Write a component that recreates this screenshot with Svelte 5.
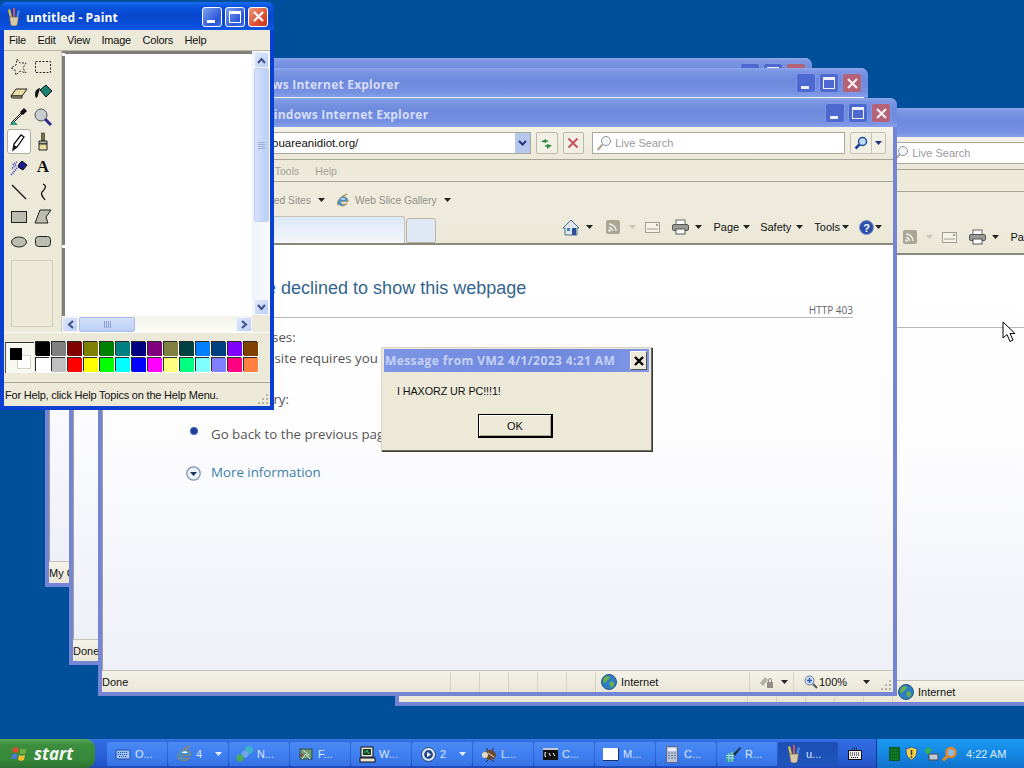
<script>
  const palette = [
    "#000000", "#808080", "#800000", "#808000", "#008000", "#008080", "#000080", "#800080", "#808040", "#004040", "#0080ff", "#004080", "#8000ff", "#804000",
    "#ffffff", "#c0c0c0", "#ff0000", "#ffff00", "#00ff00", "#00ffff", "#0000ff", "#ff00ff", "#ffff80", "#00ff80", "#80ffff", "#8080ff", "#ff0080", "#ff8040"
  ];
  const tools = ["free", "rect", "eraser", "fill", "picker", "zoom", "pencil", "brush", "air", "text", "line", "curve", "box", "poly", "oval", "round"];
  const menus = ["File", "Edit", "View", "Image", "Colors", "Help"];
  const tasks = [
    { icon: "osk", label: "O..." },
    { icon: "ie", label: "4", arrow: true },
    { icon: "net", label: "N..." },
    { icon: "fx", label: "F..." },
    { icon: "pc", label: "W..." },
    { icon: "media", label: "2", arrow: true },
    { icon: "bug", label: "L..." },
    { icon: "cmd", label: "C..." },
    { icon: "blank", label: "M..." },
    { icon: "calc", label: "C..." },
    { icon: "reg", label: "R..." },
    { icon: "paint", label: "u...", active: true }
  ];
  const ieWindows = [
    { cls: "w4", status: "Done" },
    { cls: "w1", status: "My Computer" },
    { cls: "w2", status: "Done" },
    { cls: "w3", status: "Done" }
  ];
</script>

{#snippet capButtons(kind)}
  <div class="caps {kind}">
    <span class="cap"><i class="min"></i></span>
    <span class="cap"><i class="max"></i></span>
    <span class="cap close">
      <svg width="13" height="13" viewBox="0 0 13 13"><path d="M2 2l9 9M11 2l-9 9" stroke="#fff" stroke-width="2.2" fill="none" /></svg>
    </span>
  </div>
{/snippet}

{#snippet arrow(color = "#222")}
  <svg class="arr" width="7" height="4" viewBox="0 0 7 4"><path d="M0 0h7L3.5 4z" fill={color} /></svg>
{/snippet}

{#snippet globe()}
  <svg width="16" height="16" viewBox="0 0 16 16">
    <circle cx="8" cy="8" r="7.5" fill="#2f7fc4" stroke="#23557f" />
    <path d="M3 4c2-2 5-2 6-1 0 2-2 2-3 4S3 9 2 8zM9 8c2-1 4 0 4 2s-2 4-3 3-2-3-1-5z" fill="#6bb04a" />
  </svg>
{/snippet}

{#snippet ieIcon(size = 16)}
  <svg width={size} height={size} viewBox="0 0 16 16">
    <path d="M3 13C1 9 6 3 13 1c-2 1-3 2-4 3 3 0 5 2 5 5H6c0 3 4 4 7 2-2 3-7 4-9 1-1 1-1 1-1 1z" fill="#3c8fd8" stroke="#b9862a" stroke-width=".7" />
    <path d="M6 7h5c0-2-4-2-5 0z" fill="#fff" />
  </svg>
{/snippet}

{#snippet paintIcon()}
  <svg width="14" height="18" viewBox="0 0 14 18">
    <path d="M3 10L1 2l2-1 2 8z" fill="#e8c040" />
    <path d="M6 9L6 0h2l0 9z" fill="#d85050" />
    <path d="M9 10l2-8 2 1-2 7z" fill="#5090d8" />
    <path d="M2.500 9h9l-1 7a3.500 2 0 0 1-7 0z" fill="#d8c8a8" stroke="#6a5a40" stroke-width=".6" />
  </svg>
{/snippet}

{#snippet taskIcon(name)}
  {#if name === "osk"}
    <svg width="16" height="16" viewBox="0 0 16 16"><rect x="1" y="4" width="14" height="9" rx="1" fill="#9cc4f4" stroke="#244a9c" /><path d="M3 6.5h10M3 8.5h10M4 10.5h8" stroke="#244a9c" stroke-dasharray="1 1" /></svg>
  {:else if name === "ie"}
    {@render ieIcon(18)}
  {:else if name === "net"}
    <svg width="18" height="16" viewBox="0 0 18 16"><path d="M2 13L15 3" stroke="#e8e8e8" stroke-width="2" /><circle cx="13" cy="4" r="4" fill="#39b3c8" /><circle cx="9" cy="8" r="3.5" fill="#6ca6e8" /><circle cx="4" cy="12" r="3.5" fill="#4aa858" /></svg>
  {:else if name === "fx"}
    <svg width="16" height="16" viewBox="0 0 16 16"><rect x="2" y="3" width="12" height="10" fill="#6d9c78" stroke="#2e4a48" /><path d="M4 13l4-5 4 5M5 4l6 5" stroke="#d8e8d0" fill="none" /><path d="M3 7l3 2-3 2z" fill="#b03030" /></svg>
  {:else if name === "pc"}
    <svg width="17" height="17" viewBox="0 0 17 17"><rect x="2" y="1" width="12" height="10" fill="#e8e4d4" stroke="#111" /><rect x="4" y="3" width="8" height="6" fill="#14402c" /><path d="M5 6h2l1-2 1 3h2" stroke="#50e070" fill="none" stroke-width=".7" /><rect x="1" y="12" width="15" height="4" fill="#e8e4d4" stroke="#111" /></svg>
  {:else if name === "media"}
    <svg width="15" height="15" viewBox="0 0 15 15"><circle cx="7.5" cy="7.5" r="7" fill="#dfe6f4" stroke="#24406c" /><circle cx="7.5" cy="7.5" r="4.4" fill="#24488c" /><path d="M6 5l4 2.500-4 2.500z" fill="#fff" /></svg>
  {:else if name === "bug"}
    <svg width="18" height="15" viewBox="0 0 18 15"><ellipse cx="10" cy="8" rx="6" ry="5" fill="#6a4a30" /><circle cx="5" cy="8" r="3" fill="#e8d8c0" /><path d="M8 3l-2-2M12 3l2-2M8 13l-2 2M12 13l2 2" stroke="#222" /><path d="M8 6l6 4" stroke="#e8d8c0" /></svg>
  {:else if name === "cmd"}
    <svg width="15" height="12" viewBox="0 0 15 12"><rect width="15" height="12" fill="#111" /><rect y="0" width="15" height="2" fill="#c8c8d8" /><path d="M3 4.500h-1v4h1M6 5l1.500 3M10 5l2 3" stroke="#fff" fill="none" /></svg>
  {:else if name === "blank"}
    <svg width="16" height="13" viewBox="0 0 16 13"><rect width="16" height="13" fill="#fff" /><path d="M15.500 0v12.500H0" stroke="#16306c" fill="none" /></svg>
  {:else if name === "calc"}
    <svg width="12" height="17" viewBox="0 0 12 17"><rect x=".5" y=".5" width="11" height="16" fill="#b8c4d8" stroke="#5a6a88" /><rect x="2" y="2" width="8" height="3" fill="#e8eef8" /><path d="M2 7h8M2 9.500h8M2 12h8" stroke="#6a7a98" stroke-dasharray="2 1" /></svg>
  {:else if name === "reg"}
    <svg width="17" height="17" viewBox="0 0 17 17"><path d="M1 9l8-4v11H1z" fill="#2f9ea8" /><path d="M1 12h8M1 9.500h8M4 7v9M7 6v10" stroke="#d8f0f0" stroke-width=".7" /><path d="M8 8l7-7 1 1-6 8z" fill="#203040" /></svg>
  {:else if name === "paint"}
    {@render paintIcon()}
  {/if}
{/snippet}

{#snippet toolIcon(name)}
  <svg width="20" height="20" viewBox="0 0 20 20">
    {#if name === "free"}
      <path d="M8 2l3 4 6 0-3 5 3 5-6-2-4 4-1-5-4-2 5-3z" fill="none" stroke="#222" stroke-dasharray="2 1.500" />
    {:else if name === "rect"}
      <rect x="2.500" y="4.500" width="15" height="11" fill="none" stroke="#222" stroke-dasharray="2 1.500" />
    {:else if name === "eraser"}
      <path d="M2 14l5-7h11l-5 7z" fill="#e8dca0" stroke="#222" /><path d="M2 14h11l0 2H3z" fill="#c8bc80" stroke="#222" />
    {:else if name === "fill"}
      <path d="M7 8l6-5 6 6-6 6z" fill="#1c8070" stroke="#111" /><path d="M7 6C2 7 1 12 3 16c2 0 2-4 3-6z" fill="#111" />
    {:else if name === "picker"}
      <path d="M13 7l-9 9-2 2 1-3 9-9z" fill="#fff" stroke="#111" /><path d="M11 5l4-4 3 3-4 4z" fill="#111" /><path d="M1 18h8l-4-4z" fill="#2a9a80" />
    {:else if name === "zoom"}
      <circle cx="8" cy="8" r="6" fill="#c8ccd0" stroke="#555" /><path d="M12 12l6 6" stroke="#2a2a90" stroke-width="3" />
    {:else if name === "pencil"}
      <path d="M4 18l1-6 7-9 3 2-7 10z" fill="#fff" stroke="#111" stroke-width="1.300" /><path d="M4 18l1-5 3 2z" fill="#111" />
    {:else if name === "brush"}
      <rect x="8.500" y="1" width="3" height="8" fill="#807040" stroke="#222" stroke-width=".6" /><path d="M6 9h8v3H6z" fill="#b8b8a8" stroke="#222" /><path d="M6 12h8v6H6z" fill="#e8dca0" stroke="#222" />
    {:else if name === "air"}
      <path d="M10 7l3-3 5 4-4 5-5-3z" fill="#1c1c90" stroke="#111" /><path d="M8 5L3 8M7 8l-5 4M8 11l-6 7" stroke="#4444c0" stroke-dasharray="1 1" stroke-width="2" />
    {:else if name === "line"}
      <path d="M3 3l14 14" stroke="#111" stroke-width="1.300" />
    {:else if name === "curve"}
      <path d="M10 2c5 2 1 6-1 8-2 3 2 6 3 8" stroke="#111" fill="none" stroke-width="1.300" />
    {:else if name === "box"}
      <rect x="2.500" y="4.500" width="15" height="11" fill="#bcbcb0" stroke="#222" />
    {:else if name === "poly"}
      <path d="M7 3h11l-5 7 2 6H2z" fill="#bcbcb0" stroke="#222" />
    {:else if name === "oval"}
      <ellipse cx="10" cy="10" rx="7.500" ry="5" fill="#bcbcb0" stroke="#222" />
    {:else if name === "round"}
      <rect x="2.500" y="4.500" width="15" height="10" rx="3" fill="#bcbcb0" stroke="#222" />
    {/if}
  </svg>
{/snippet}

{#snippet ieWindow(win)}
  <section class="ie {win.cls}">
    <header class="ie-title">
      <span class="ie-name">HTTP 403 Forbidden - Windows Internet Explorer</span>
      {@render capButtons("faded")}
    </header>

    <div class="ie-address">
      <div class="url">
        <span>http://www.youareanidiot.org/</span>
        <span class="drop">
          <svg width="9" height="7" viewBox="0 0 9 7"><path d="M1 1l3.500 3.500L8 1" stroke="#23337a" stroke-width="2" fill="none" /></svg>
        </span>
      </div>
      <span class="nav-btn">
        <svg width="15" height="13" viewBox="0 0 15 13"><path d="M7 2L2 4.500 7 6zM8 12l5-3.500L8 7z" fill="#2c8a3c" /><path d="M6 4h3M9 9H6" stroke="#2c8a3c" stroke-width="1.500" /></svg>
      </span>
      <span class="nav-btn">
        <svg width="12" height="12" viewBox="0 0 12 12"><path d="M1.500 1.500l9 9M10.500 1.500l-9 9" stroke="#c5525a" stroke-width="2" /></svg>
      </span>
      <div class="search">
        <svg width="16" height="17" viewBox="0 0 16 17"><circle cx="10" cy="6" r="4.500" fill="#f4f6f8" stroke="#8a959c" /><path d="M6.500 9.500L1.500 15" stroke="#a9a28c" stroke-width="2" /></svg>
        <span>Live Search</span>
      </div>
      <div class="search-go">
        <span class="lens">
          <svg width="14" height="14" viewBox="0 0 14 14"><circle cx="8.500" cy="5.500" r="4" fill="#bcdcf8" stroke="#1f4f9c" stroke-width="1.500" /><path d="M5.500 8.500L1.500 12.500" stroke="#1f3f8c" stroke-width="2.500" /></svg>
        </span>
        <span class="lens-drop">{@render arrow("#23337a")}</span>
      </div>
    </div>

    <nav class="ie-menu">
      <span>File</span><span>Edit</span><span>View</span><span>Favorites</span><span>Tools</span><span>Help</span>
    </nav>

    <div class="ie-favs">
      <span class="fav-lead">Favorites</span>
      <span class="fav">Suggested Sites</span>
      {@render arrow()}
      <span class="fav-icon">{@render ieIcon(15)}</span>
      <span class="fav">Web Slice Gallery</span>
      {@render arrow()}
    </div>

    <div class="ie-tabs">
      <span class="tab"></span>
      <span class="tab-new"></span>
      <div class="cmd">
        <svg width="18" height="17" viewBox="0 0 18 17"><path d="M9 1L1 9h2v7h12V9h2z" fill="#dfe7ee" stroke="#4c6f80" /><rect x="10" y="9" width="4" height="7" fill="#2c4c9c" /><rect x="5" y="9" width="3" height="3" fill="#3f7fc4" /></svg>
        <span class="a-home">{@render arrow()}</span>
        <svg class="rss" width="14" height="14" viewBox="0 0 14 14"><rect width="14" height="14" rx="2" fill="#a9a794" /><path d="M3 4a7 7 0 0 1 7 7M3 7.500a3.500 3.500 0 0 1 3.500 3.500" stroke="#eee" stroke-width="1.500" fill="none" /><circle cx="3.500" cy="10.500" r="1.300" fill="#eee" /></svg>
        <span class="a-off">{@render arrow("#c9c7b8")}</span>
        <svg class="mail" width="15" height="11" viewBox="0 0 15 11"><rect x=".5" y=".5" width="14" height="10" fill="#f4f2e8" stroke="#a09e90" /><path d="M2 7h11" stroke="#a09e90" /><rect x="11" y="2" width="2" height="2" fill="#a09e90" /></svg>
        <svg class="printer" width="17" height="16" viewBox="0 0 17 16"><rect x="4" y="1" width="9" height="5" fill="#fff" stroke="#666" /><rect x=".5" y="5.500" width="16" height="6" rx="1.500" fill="#9a9a98" stroke="#555" /><rect x="4" y="10" width="9" height="5" fill="#fff" stroke="#555" /></svg>
        <span class="a-print">{@render arrow()}</span>
        <span class="c-page">Page</span><span class="a-page">{@render arrow()}</span>
        <span class="c-safety">Safety</span><span class="a-safety">{@render arrow()}</span>
        <span class="c-tools">Tools</span><span class="a-tools">{@render arrow()}</span>
        <svg class="help" width="15" height="15" viewBox="0 0 15 15"><circle cx="7.500" cy="7.500" r="7" fill="#2d4ea8" stroke="#7c93c8" /><text x="7.500" y="11.500" font-size="11" font-weight="700" fill="#fff" text-anchor="middle" font-family="Liberation Sans">?</text></svg>
        <span class="a-help">{@render arrow()}</span>
      </div>
    </div>

    <main class="ie-page">
      <h1>The website declined to show this webpage</h1>
      <div class="code">HTTP 403</div>
      <p class="cause">Most likely causes:</p>
      <p class="cause-item">This website requires you to log in.</p>
      <p class="try">What you can try:</p>
      <div class="row back"><i class="dot"></i><span>Go back to the previous page.</span></div>
      <div class="row more">
        <svg width="15" height="15" viewBox="0 0 15 15"><circle cx="7.500" cy="7.500" r="6.700" fill="#eef2f8" stroke="#7d95b4" stroke-width="1.300" /><path d="M4 6h7L7.500 10z" fill="#17305c" /></svg>
        <span>More information</span>
      </div>
    </main>

    <footer class="ie-status">
      <span class="st-text">{win.status}</span>
      <span class="st-cell"></span><span class="st-cell"></span><span class="st-cell"></span><span class="st-cell"></span><span class="st-cell"></span>
      <span class="st-zone">{@render globe()}<span>Internet</span></span>
      <span class="st-lock">
        <svg width="15" height="14" viewBox="0 0 15 14"><path d="M1 8l5-6 3 3-5 6z" fill="#b0b0a4" /><rect x="8" y="7" width="6" height="6" fill="#908e84" /><path d="M9.500 7V5a1.500 1.500 0 0 1 3 0v2" stroke="#908e84" fill="none" /></svg>
        {@render arrow()}
      </span>
      <span class="st-zoom">
        <svg width="14" height="14" viewBox="0 0 14 14"><circle cx="5.500" cy="5.500" r="4.500" fill="#cfe2f8" stroke="#6a7c94" /><path d="M3 5.500h5M5.500 3v5" stroke="#2c5cc0" stroke-width="1.500" /><path d="M9 9l4 4" stroke="#555" stroke-width="2" /></svg>
        <span>100%</span>
        <span class="zoom-arr">{@render arrow()}</span>
      </span>
      <span class="grip"></span>
    </footer>
  </section>
{/snippet}

<div class="desktop">
  {#each ieWindows as win}
    {@render ieWindow(win)}
  {/each}

  <section class="paint">
    <header class="paint-title">
      <span class="paint-ico">{@render paintIcon()}</span>
      <span class="paint-name">untitled - Paint</span>
      {@render capButtons("bright")}
    </header>
    <nav class="paint-menu">
      {#each menus as m}<span>{m}</span>{/each}
    </nav>
    <div class="paint-main">
      <aside class="toolbox">
        <div class="tools">
          {#each tools as t}
            <span class="tool" class:on={t === "pencil"}>
              {#if t === "text"}
                <b class="glyph-a">A</b>
              {:else}
                {@render toolIcon(t)}
              {/if}
            </span>
          {/each}
        </div>
        <div class="tool-opts"></div>
      </aside>
      <div class="canvas-wrap">
        <div class="canvas"><i class="handle h1"></i><i class="handle h2"></i></div>
        <div class="hbar">
          <span class="sb-btn">
            <svg width="7" height="9" viewBox="0 0 7 9"><path d="M6 1L2 4.500 6 8" stroke="#3d4f8f" stroke-width="2" fill="none" /></svg>
          </span>
          <span class="hthumb"><i></i></span>
          <span class="sb-btn right">
            <svg width="7" height="9" viewBox="0 0 7 9"><path d="M1 1l4 3.500L1 8" stroke="#3d4f8f" stroke-width="2" fill="none" /></svg>
          </span>
        </div>
      </div>
      <div class="vbar">
        <span class="sb-btn">
          <svg width="9" height="7" viewBox="0 0 9 7"><path d="M1 6l3.500-4L8 6" stroke="#3d4f8f" stroke-width="2" fill="none" /></svg>
        </span>
        <span class="vthumb"><i></i></span>
        <span class="sb-btn end">
          <svg width="9" height="7" viewBox="0 0 9 7"><path d="M1 1l3.500 4L8 1" stroke="#3d4f8f" stroke-width="2" fill="none" /></svg>
        </span>
      </div>
    </div>
    <div class="paint-colors">
      <div class="current"><i class="bg"></i><i class="fg"></i></div>
      <div class="swatches">
        {#each palette as c}
          <span class="swatch" style="background:{c}"></span>
        {/each}
      </div>
    </div>
    <footer class="paint-status">
      <span>For Help, click Help Topics on the Help Menu.</span>
      <span class="grip"></span>
    </footer>
  </section>

  <div class="dialog">
    <header class="dlg-title">
      <span>Message from VM2 4/1/2023 4:21 AM</span>
      <span class="dlg-x">
        <svg width="10" height="10" viewBox="0 0 10 10"><path d="M1 1l8 8M9 1l-8 8" stroke="#000" stroke-width="2.400" /></svg>
      </span>
    </header>
    <p>I HAXORZ UR PC!!!1!</p>
    <button class="ok">OK</button>
  </div>

  <svg class="cursor" width="14" height="22" viewBox="0 0 14 22"><path d="M1 1v16l4-3.500 3 7 3-1.500-3-6.500h5z" fill="#fff" stroke="#000" /></svg>

  <div class="spacer"></div>

  <div class="taskbar">
    <div class="start">
      <svg width="18" height="18" viewBox="0 0 18 18">
        <path d="M2 3c2-1 4-1 6 0L7 8C5 7 3 7 1 8z" fill="#d8502c" />
        <path d="M9.500 3.500c2 1 4 1 6 0l-1 5c-2 1-4 1-6 0z" fill="#6cb040" />
        <path d="M1 9.500c2-1 4-1 5.500 0l-1 5c-2-1-4-1-5.500 0z" fill="#4a7ad8" />
        <path d="M8 10c2 1 4 1 6 0l-1 5c-2 1-4 1-6 0z" fill="#f0c030" />
      </svg>
      <span>start</span>
    </div>
    <div class="tasks">
      {#each tasks as t}
        <div class="task" class:active={t.active}>
          <span class="task-ico">{@render taskIcon(t.icon)}</span>
          <span class="task-label">{t.label}</span>
          {#if t.arrow}<span class="task-arr">{@render arrow("#e8f0ff")}</span>{/if}
        </div>
      {/each}
    </div>
    <div class="kbd">
      <svg width="14" height="13" viewBox="0 0 14 13"><path d="M4 0h6M4 2h6" stroke="#111" stroke-dasharray="1 1" /><rect x=".5" y="3.500" width="13" height="9" fill="#eee" stroke="#111" /><path d="M2 6h10M2 8h10M3 10.500h8" stroke="#111" stroke-dasharray="1 1" /></svg>
    </div>
    <div class="tray">
      <svg width="11" height="14" viewBox="0 0 11 14"><rect width="11" height="14" fill="#0a6a1c" stroke="#043" /><path d="M2 3h7M2 6h7M2 9h7M2 12h7" stroke="#2a9a3c" stroke-dasharray="1 1" /></svg>
      <svg width="13" height="15" viewBox="0 0 13 15"><path d="M6.500 1C9 2 10 2.500 12 2.500c0 6-1 9-5.500 11.500C2 11.500 1 8.500 1 2.500 3 2.500 4 2 6.500 1z" fill="#f2d040" stroke="#2a5ab0" /><path d="M6.500 4v5" stroke="#333" stroke-width="1.500" /><circle cx="6.500" cy="11" r=".9" fill="#333" /></svg>
      <svg width="16" height="16" viewBox="0 0 16 16"><path d="M5 1l5 4H7v3H3V5H1z" fill="#3cb050" /><rect x="6" y="8" width="9" height="6" fill="#c0c8d0" stroke="#445" /></svg>
      <svg class="tray-find" width="17" height="16" viewBox="0 0 17 16"><circle cx="10" cy="6.500" r="4.500" fill="#8fb8e8" stroke="#e88a24" stroke-width="2.400" /><path d="M6.500 10L2 14.500" stroke="#e88a24" stroke-width="3" /></svg>
      <span class="clock">4:22 AM</span>
    </div>
  </div>
</div>

<style>
  :global(body) {
    margin: 0;
    overflow: hidden;
    font-family: "Liberation Sans", Arial, sans-serif;
  }

  .desktop {
    position: relative;
    width: 1024px;
    height: 768px;
    overflow: hidden;
    background: #004f9b;
    display: flex;
    flex-direction: column;
    font-size: 11px;
    color: #111;
  }

  .spacer {
    flex: 1;
  }

  .cursor {
    position: absolute;
    left: 1002px;
    top: 321px;
  }

  /* IE windows: free canvas, each is offset from the last */
  .ie {
    position: absolute;
    box-sizing: border-box;
    display: flex;
    flex-direction: column;
    width: 799px;
    height: 598px;
    background: #ece9d8;
    border: 4px solid #7485d6;
    border-top: 0;
    border-radius: 7px 7px 0 0;
  }
  .w1 { left: 45px; top: 58px; width: 767px; height: 529px; }
  .w2 { left: 69px; top: 68px; height: 597px; }
  .w3 { left: 98px; top: 98px; }
  .w4 { left: 395px; top: 108px; }

  .ie-title {
    height: 29px;
    margin: 0 -4px;
    padding: 0 6px 0 0;
    flex: none;
    display: flex;
    align-items: center;
    justify-content: space-between;
    border-radius: 7px 7px 0 0;
    background: linear-gradient(#8da6ea 0, #7d97e4 3px, #6d89dc 12px, #7690e2 24px, #86a0ea 29px);
    color: #d5def8;
    font-family: "Open Sans", sans-serif;
    font-weight: 700;
    font-size: 12px;
  }
  .ie-name {
    padding: 4px 0 0 31px;
    letter-spacing: .22px;
    white-space: nowrap;
  }

  .caps {
    display: flex;
    gap: 3px;
    margin-top: 1px;
  }
  .cap {
    box-sizing: border-box;
    width: 20px;
    height: 20px;
    display: flex;
    align-items: center;
    justify-content: center;
    border: 1px solid #fff;
    border-radius: 3px;
    position: relative;
  }
  .caps.faded .cap {
    background: #4d69cf;
    border-color: #7f97e4;
  }
  .caps.faded .cap.close {
    background: #b56277;
  }
  .caps.bright .cap {
    background: linear-gradient(135deg, #7ea3f2, #2b57d8 70%, #3a6ae6);
  }
  .caps.bright .cap.close {
    background: linear-gradient(135deg, #ef9a7c, #d8482c 70%, #c43a1c);
  }
  .min {
    position: absolute;
    left: 4px;
    bottom: 3px;
    width: 8px;
    height: 3px;
    background: #fff;
  }
  .max {
    box-sizing: border-box;
    width: 12px;
    height: 12px;
    border: 1px solid #fff;
    border-top-width: 3px;
  }
  .faded .min, .faded .max { opacity: .9; }
  .faded .close svg { opacity: .9; }

  .ie-address {
    height: 33px;
    flex: none;
    display: flex;
    align-items: center;
    box-sizing: border-box;
    border-bottom: 1px solid #a6a493;
    padding: 0 7px 0 97px;
    background: linear-gradient(#f4f2e8, #ebe8d8);
  }
  .url {
    box-sizing: border-box;
    width: 336px;
    height: 22px;
    display: flex;
    align-items: center;
    justify-content: space-between;
    background: #fff;
    border: 1px solid #a8a898;
    padding-left: 10px;
    font-size: 11.500px;
    color: #111;
  }
  .drop {
    width: 15px;
    height: 20px;
    background: #b6c7ee;
    display: flex;
    align-items: center;
    justify-content: center;
  }
  .nav-btn {
    box-sizing: border-box;
    width: 22px;
    height: 22px;
    margin-left: 5px;
    display: flex;
    align-items: center;
    justify-content: center;
    border: 1px solid #bbb9a8;
    border-radius: 2px;
    background: #f2f0e4;
  }
  .search {
    box-sizing: border-box;
    width: 256px;
    height: 22px;
    margin-left: 8px;
    display: flex;
    align-items: center;
    gap: 3px;
    padding-left: 3px;
    background: #fff;
    border: 1px solid #a8a898;
    color: #9a9a9a;
    font-size: 11px;
  }
  .search-go {
    margin-left: 5px;
    height: 22px;
    display: flex;
    box-sizing: border-box;
    border: 1px solid #c4c2b2;
    border-radius: 2px;
    background: #f2f0e4;
  }
  .lens {
    width: 20px;
    display: flex;
    align-items: center;
    justify-content: center;
    border-right: 1px solid #c4c2b2;
  }
  .lens-drop {
    width: 13px;
    display: flex;
    align-items: center;
    justify-content: center;
  }

  .ie-menu {
    height: 22px;
    flex: none;
    box-sizing: border-box;
    display: flex;
    align-items: center;
    border-bottom: 1px solid #a6a493;
    padding: 1px 0 0 8px;
    background: linear-gradient(#ece9d8, #eeebdc);
    color: #a2a096;
    font-size: 10.500px;
    gap: 16px;
  }

  .ie-favs {
    height: 33px;
    flex: none;
    box-sizing: border-box;
    display: flex;
    align-items: center;
    padding: 3px 0 0 30px;
    background: #eeebdc;
    color: #8f8f88;
    font-size: 10.300px;
  }
  .fav-lead { width: 104px; }
  .fav { white-space: nowrap; }
  .ie-favs .arr { margin-left: 7px; }
  .fav-icon {
    margin: 0 5px 0 10px;
    display: flex;
  }

  .ie-tabs {
    height: 30px;
    flex: none;
    display: flex;
    align-items: flex-end;
    box-sizing: border-box;
    border-bottom: 2px solid #8a8878;
    background: linear-gradient(#eeebdc, #ebe8d8);
  }
  .tab {
    box-sizing: border-box;
    width: 303px;
    height: 27px;
    background: linear-gradient(#dce8f8, #f4f7fb);
    border: 1px solid #c4c2b2;
    border-bottom: 0;
    border-radius: 3px 3px 0 0;
  }
  .tab-new {
    box-sizing: border-box;
    width: 30px;
    height: 25px;
    margin-left: 1px;
    background: #dfe8f4;
    border: 1px solid #b8b6a6;
    border-radius: 3px 3px 2px 2px;
  }
  .cmd {
    flex: 1;
    height: 28px;
    box-sizing: border-box;
    display: flex;
    align-items: center;
    justify-content: flex-end;
    padding: 0 11px 4px 0;
    color: #111;
    font-size: 11px;
  }
  .cmd > span { display: flex; align-items: center; }
  .a-home { margin-left: 6px; }
  .rss { margin-left: 13px; }
  .a-off { margin-left: 9px; }
  .mail { margin-left: 9px; }
  .printer { margin-left: 12px; }
  .a-print { margin-left: 6px; }
  .c-page { margin-left: 11px; }
  .a-page { margin-left: 4px; }
  .c-safety { margin-left: 10px; }
  .a-safety { margin-left: 5px; }
  .c-tools { margin-left: 11px; }
  .a-tools { margin-left: 2px; }
  .help { margin-left: 10px; }
  .a-help { margin-left: 1px; }

  .ie-page {
    flex: 1;
    min-height: 0;
    overflow: hidden;
    box-sizing: border-box;
    padding: 0 0 0 78px;
    background: linear-gradient(#fff, #fdfdfe 45%, #eef0f8);
    border-left: 1px solid #a0a098;
    color: #555;
    font-family: "Open Sans", sans-serif;
    font-size: 13.300px;
  }
  h1 {
    margin: 31px 0 0 -2px;
    font-family: "Liberation Sans", sans-serif;
    font-weight: 400;
    font-size: 18px;
    line-height: 24px;
    color: #34658c;
    white-space: nowrap;
  }
  .code {
    width: 672px;
    margin-top: 4px;
    text-align: right;
    font-size: 10px;
    line-height: 13px;
    color: #666;
    border-bottom: 1px solid #b8b8b8;
  }
  .cause { margin: 10px 0 0; line-height: 18px; }
  .cause-item { margin: 3px 0 0 39px; line-height: 18px; }
  .try { margin: 23px 0 0; line-height: 18px; }
  .row {
    display: flex;
    align-items: center;
    white-space: nowrap;
    margin-left: 5px;
  }
  .back { margin-top: 17px; height: 18px; }
  .dot {
    width: 8px;
    height: 8px;
    border-radius: 50%;
    margin: -6px 0 0 4px;
    background: radial-gradient(#1f3f9c 40%, #6f9ae0);
  }
  .back span { margin-left: 13px; }
  .more { margin-top: 20px; height: 18px; color: #3d7fa8; }
  .more svg { margin-top: 2px; }
  .more span { margin-left: 10px; }

  .ie-status {
    position: relative;
    height: 22px;
    flex: none;
    display: flex;
    align-items: center;
    box-sizing: border-box;
    border-top: 1px solid #c4c2b2;
    padding-top: 1px;
    background: linear-gradient(#f4f2e8, #e9e6d6);
    font-size: 11px;
    color: #111;
  }
  .st-text {
    width: 348px;
    box-sizing: border-box;
    white-space: nowrap;
    overflow: hidden;
  }
  .st-cell {
    width: 28px;
    height: 100%;
    border-left: 1px solid #d6d3c2;
  }
  .st-zone {
    width: 154px;
    display: flex;
    align-items: center;
    gap: 4px;
    height: 100%;
    border-left: 1px solid #d6d3c2;
    box-sizing: border-box;
    padding-left: 5px;
  }
  .st-lock {
    width: 44px;
    height: 100%;
    box-sizing: border-box;
    display: flex;
    align-items: center;
    gap: 7px;
    padding-left: 9px;
    border-left: 1px solid #d6d3c2;
  }
  .st-zoom {
    height: 100%;
    display: flex;
    align-items: center;
    gap: 1px;
    padding-left: 10px;
    border-left: 1px solid #d6d3c2;
  }
  .zoom-arr { margin-left: 15px; display: flex; }
  .grip {
    position: absolute;
    right: 2px;
    bottom: 2px;
    width: 11px;
    height: 11px;
    background-image: radial-gradient(circle, #b2afa0 1px, transparent 1.200px);
    background-size: 4px 4px;
    clip-path: polygon(100% 0, 100% 100%, 0 100%);
  }

  /* Paint */
  .paint {
    position: absolute;
    left: 0;
    top: 2px;
    box-sizing: border-box;
    width: 274px;
    height: 408px;
    display: flex;
    flex-direction: column;
    background: #ece9d8;
    border: 4px solid #0a3fd0;
    border-top: 0;
    border-radius: 7px 7px 0 0;
  }
  .paint-title {
    height: 28px;
    flex: none;
    margin: 0 -4px;
    padding-right: 6px;
    display: flex;
    align-items: center;
    border-radius: 7px 7px 0 0;
    background: linear-gradient(#1a6cf0 0, #0a56e0 4px, #0646cc 14px, #0a50dc 24px, #0e58e4 28px);
    color: #fff;
    font-family: "Open Sans", sans-serif;
    font-weight: 700;
    font-size: 12px;
  }
  .paint-ico {
    display: flex;
    margin: 1px 5px 0 7px;
  }
  .paint-name {
    flex: 1;
    padding-top: 3px;
    letter-spacing: .12px;
    white-space: nowrap;
  }
  .paint-menu {
    height: 20px;
    flex: none;
    display: flex;
    align-items: center;
    gap: 11.500px;
    padding-left: 5px;
    border-bottom: 1px solid #b8b6a6;
    font-size: 11px;
    letter-spacing: -.2px;
  }
  .paint-main {
    height: 281px;
    flex: none;
    display: flex;
    border-bottom: 1px solid #fff;
  }
  .toolbox {
    width: 58px;
    flex: none;
    border-right: 1px solid #c8c6b6;
    box-sizing: border-box;
    padding: 3px 0 0 3px;
  }
  .tools {
    display: grid;
    grid-template-columns: 24px 24px;
    grid-auto-rows: 25px;
  }
  .tool {
    display: flex;
    align-items: center;
    justify-content: center;
  }
  .tool.on {
    background: #fff;
    border: 1px solid #b0ae9e;
    border-radius: 3px;
    box-sizing: border-box;
  }
  .glyph-a {
    font-family: "Liberation Serif", serif;
    font-size: 17px;
    color: #111;
  }
  .tool-opts {
    box-sizing: border-box;
    width: 42px;
    height: 67px;
    margin: 6px 0 0 4px;
    border: 1px solid #cfcdbc;
  }
  .canvas-wrap {
    width: 190px;
    flex: none;
    display: flex;
    flex-direction: column;
  }
  .canvas {
    flex: 1;
    position: relative;
    background: #fff;
    border-left: 3px solid #80807a;
    border-top: 3px solid #80807a;
  }
  .handle {
    position: absolute;
    width: 3px;
    height: 3px;
    background: #fff;
    left: -3px;
  }
  .h1 { top: -1px; }
  .h2 { top: 191px; }
  .hbar {
    height: 16px;
    flex: none;
    display: flex;
    align-items: center;
    background: linear-gradient(#f4f4ec, #fdfdf8);
  }
  .sb-btn {
    box-sizing: border-box;
    width: 16px;
    height: 15px;
    flex: none;
    display: flex;
    align-items: center;
    justify-content: center;
    background: linear-gradient(135deg, #dfe8fb, #bccff6);
    border: 1px solid #f0f4fd;
    border-radius: 2px;
  }
  .sb-btn.right { margin-left: auto; }
  .hthumb {
    box-sizing: border-box;
    width: 56px;
    height: 15px;
    margin-left: 1px;
    display: flex;
    align-items: center;
    justify-content: center;
    background: linear-gradient(#d4e0fa, #bccff6);
    border: 1px solid #a9bbe8;
    border-radius: 2px;
  }
  .hthumb i {
    width: 7px;
    height: 7px;
    background: repeating-linear-gradient(90deg, #8ea2d8 0 1px, transparent 1px 2px);
  }
  .vbar {
    width: 18px;
    flex: none;
    height: 263px;
    display: flex;
    flex-direction: column;
    align-items: center;
    padding-top: 1px;
    background: linear-gradient(90deg, #f0f3fc, #fafbff);
  }
  .vbar .sb-btn { width: 15px; height: 16px; }
  .vbar .sb-btn.end { margin-top: auto; }
  .vthumb {
    box-sizing: border-box;
    width: 15px;
    height: 154px;
    display: flex;
    align-items: center;
    justify-content: center;
    background: linear-gradient(90deg, #d4e0fa, #bccff6);
    border: 1px solid #c4d2f4;
    border-radius: 2px;
  }
  .vthumb i {
    width: 7px;
    height: 7px;
    background: repeating-linear-gradient(#9cacd8 0 1px, transparent 1px 2px);
  }
  .paint-colors {
    height: 50px;
    flex: none;
    display: flex;
    box-sizing: border-box;
    padding: 9px 0 0 1px;
    border-bottom: 1px solid #a6a493;
  }
  .current {
    position: relative;
    box-sizing: border-box;
    width: 29px;
    height: 31px;
    background: #f8f8f2;
    border-top: 1px solid #333;
    border-left: 1px solid #555;
    flex: none;
  }
  .fg, .bg {
    position: absolute;
    width: 12px;
    height: 12px;
  }
  .fg { left: 4px; top: 5px; background: #000; }
  .bg { left: 11px; top: 12px; background: #fff; border: 1px solid #d4d2c4; }
  .swatches {
    margin-left: 2px;
    display: grid;
    grid-template-columns: repeat(14, 14px);
    grid-auto-rows: 14px;
    gap: 2px;
  }
  .swatch {
    box-shadow: -1px -1px 0 #2a2a2a, 1px 1px 0 #fff;
  }
  .paint-status {
    position: relative;
    flex: 1;
    display: flex;
    align-items: center;
    padding: 1px 0 0 1px;
    font-size: 11px;
    letter-spacing: -.2px;
    white-space: nowrap;
  }

  /* Message box */
  .dialog {
    position: absolute;
    left: 381px;
    top: 347px;
    box-sizing: border-box;
    width: 271px;
    height: 104px;
    padding: 1px 2px 2px;
    display: flex;
    flex-direction: column;
    background: #ece9d8;
    border: 1px solid #d8d6c8;
    border-right-color: #6e6c60;
    border-bottom-color: #6e6c60;
    box-shadow: 1px 1px 0 #3a3a3a;
  }
  .dlg-title {
    height: 23px;
    flex: none;
    display: flex;
    align-items: center;
    justify-content: space-between;
    padding: 0 2px 0 1px;
    background: linear-gradient(90deg, #7f96e6, #6f87dc 60%, #7f96e6);
    color: #c4d2f6;
    font-family: "Open Sans", sans-serif;
    font-size: 12px;
    font-weight: 700;
    letter-spacing: .4px;
    white-space: nowrap;
  }
  .dlg-x {
    box-sizing: border-box;
    width: 17px;
    height: 19px;
    display: flex;
    align-items: center;
    justify-content: center;
    background: #ece9d8;
    border: 1px solid;
    border-color: #fff #555 #555 #fff;
  }
  .dialog p {
    margin: 13px 0 0 13px;
    font-size: 10.800px;
    letter-spacing: -.1px;
    line-height: 13px;
  }
  .ok {
    box-sizing: border-box;
    width: 75px;
    height: 24px;
    margin: 16px 0 0 94px;
    padding: 0;
    background: #ece9d8;
    border: 1px solid #000;
    border-right-width: 2px;
    border-bottom-width: 2px;
    box-shadow: inset 1px 1px 0 #fff, inset -1px -1px 0 #aca899;
    font: 11px "Liberation Sans", sans-serif;
    color: #111;
  }

  /* Taskbar */
  .taskbar {
    height: 29px;
    flex: none;
    display: flex;
    align-items: stretch;
    position: relative;
    background: linear-gradient(#3b76e4 0, #2f6ae0 2px, #2b63da 16px, #2454c8 26px, #1f48b4 29px);
  }
  .start {
    width: 95px;
    flex: none;
    box-sizing: border-box;
    display: flex;
    align-items: center;
    gap: 5px;
    padding-left: 11px;
    border-radius: 0 9px 9px 0;
    background: linear-gradient(#58a858 0, #3d8f3f 5px, #37883a 20px, #2a7230 29px);
    color: #f4f4f4;
    font-family: "Open Sans", sans-serif;
    font-size: 17px;
    font-style: italic;
    font-weight: 700;
  }
  .tasks {
    margin-left: 12px;
    display: flex;
    gap: 1px;
    padding-top: 2px;
    height: 26px;
  }
  .task {
    box-sizing: border-box;
    width: 60px;
    height: 24px;
    margin-top: 1px;
    display: flex;
    align-items: center;
    gap: 3px;
    padding-left: 7px;
    border-radius: 2px;
    background: linear-gradient(#4a8af4, #3c7df0 60%, #3873e4);
    color: #dce8ff;
    font-size: 11px;
    white-space: nowrap;
  }
  .task.active {
    background: linear-gradient(#1c4fb4, #1f55bc);
  }
  .task-ico {
    width: 18px;
    flex: none;
    display: flex;
    justify-content: center;
  }
  .task-arr {
    margin-left: auto;
    margin-right: 6px;
    display: flex;
  }
  .kbd {
    margin-left: 10px;
    width: 28px;
    display: flex;
    align-items: center;
  }
  .tray {
    flex: 1;
    box-sizing: border-box;
    display: flex;
    align-items: center;
    gap: 5px;
    padding-left: 12px;
    border-left: 1px solid #0f2f8c;
    background: linear-gradient(#1c9af0, #1488e4 50%, #1072cc);
    color: #dcecff;
    font-size: 11px;
  }
  .tray-find { margin-left: -3px; }
  .clock {
    margin-left: 3px;
    white-space: nowrap;
  }
</style>
